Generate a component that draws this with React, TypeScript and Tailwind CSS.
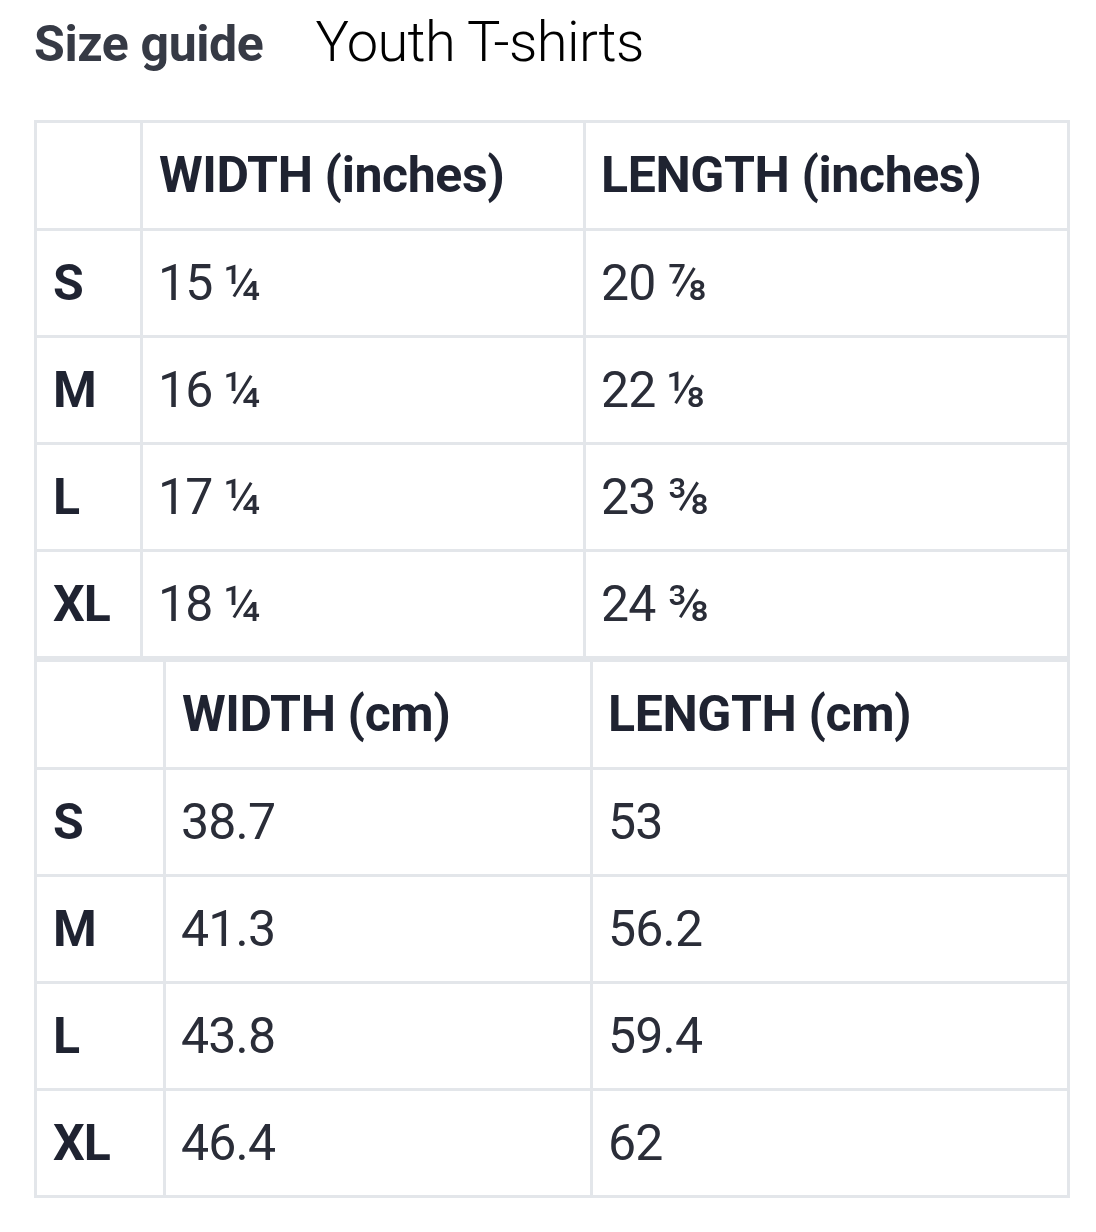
import React from "react";

type Row = [string, string, string];

const inchRows: Row[] = [
  ["S", "15 ¼", "20 ⅞"],
  ["M", "16 ¼", "22 ⅛"],
  ["L", "17 ¼", "23 ⅜"],
  ["XL", "18 ¼", "24 ⅜"],
];

const cmRows: Row[] = [
  ["S", "38.7", "53"],
  ["M", "41.3", "56.2"],
  ["L", "43.8", "59.4"],
  ["XL", "46.4", "62"],
];

function SizeTable({
  head,
  rows,
  widths,
}: {
  head: [string, string];
  rows: Row[];
  widths: [string, string, string];
}) {
  return (
    <table className="w-[1033px] table-fixed border-collapse border-[3px] border-[#e3e6ea]">
      <colgroup>
        <col className={widths[0]} />
        <col className={widths[1]} />
        <col className={widths[2]} />
      </colgroup>
      <thead>
        <tr className="h-[108px]">
          <th className="border-[3px] border-[#e3e6ea]"></th>
          <th className="border-[3px] border-[#e3e6ea] pl-[16px] text-left font-bold text-[#1f2331] text-[50px] tracking-[-0.4px]">
            {head[0]}
          </th>
          <th className="border-[3px] border-[#e3e6ea] pl-[15px] text-left font-bold text-[#1f2331] text-[50px] tracking-[-0.4px]">
            {head[1]}
          </th>
        </tr>
      </thead>
      <tbody>
        {rows.map((r) => (
          <tr key={r[0]} className="h-[107px]">
            <td className="border-[3px] border-[#e3e6ea] pl-[16px] font-bold text-[#1f2331] text-[50px] tracking-[-1px]">
              {r[0]}
            </td>
            <td className="border-[3px] border-[#e3e6ea] pl-[15px] text-[#2a2d38] text-[50px] tracking-[-0.8px]">
              {r[1]}
            </td>
            <td className="border-[3px] border-[#e3e6ea] pl-[15px] text-[#2a2d38] text-[50px] tracking-[-0.8px]">
              {r[2]}
            </td>
          </tr>
        ))}
      </tbody>
    </table>
  );
}

export default function App() {
  return (
    <div
      className="w-[1096px] h-[1232px] bg-white pl-[34px]"
      style={{ fontFamily: "Roboto, 'Noto Sans', sans-serif" }}
    >
      <div className="flex items-baseline gap-[52px] h-[74px]">
        <span className="font-bold text-[50px] text-[#363a45] tracking-[-0.4px]">Size guide</span>
        <span className="font-light text-[56px] text-black tracking-[-0.6px]">Youth T-shirts</span>
      </div>
      <div className="mt-[46px]">
        <SizeTable
          head={["WIDTH (inches)", "LENGTH (inches)"]}
          rows={inchRows}
          widths={["w-[106px]", "w-[443px]", "w-[484px]"]}
        />
        <SizeTable
          head={["WIDTH (cm)", "LENGTH (cm)"]}
          rows={cmRows}
          widths={["w-[129px]", "w-[427px]", "w-[477px]"]}
        />
      </div>
    </div>
  );
}
